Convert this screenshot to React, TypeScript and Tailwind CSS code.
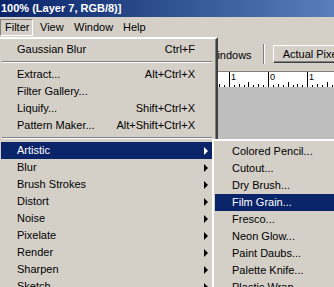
import React from "react";

type Item =
  | { kind: "sep" }
  | { kind: "item"; label: string; shortcut?: string; sub?: boolean; active?: boolean };

const filterItems: Item[] = [
  { kind: "item", label: "Gaussian Blur", shortcut: "Ctrl+F" },
  { kind: "sep" },
  { kind: "item", label: "Extract...", shortcut: "Alt+Ctrl+X" },
  { kind: "item", label: "Filter Gallery..." },
  { kind: "item", label: "Liquify...", shortcut: "Shift+Ctrl+X" },
  { kind: "item", label: "Pattern Maker...", shortcut: "Alt+Shift+Ctrl+X" },
  { kind: "sep" },
  { kind: "item", label: "Artistic", sub: true, active: true },
  { kind: "item", label: "Blur", sub: true },
  { kind: "item", label: "Brush Strokes", sub: true },
  { kind: "item", label: "Distort", sub: true },
  { kind: "item", label: "Noise", sub: true },
  { kind: "item", label: "Pixelate", sub: true },
  { kind: "item", label: "Render", sub: true },
  { kind: "item", label: "Sharpen", sub: true },
  { kind: "item", label: "Sketch", sub: true },
  { kind: "item", label: "Stylize", sub: true },
];

const artisticItems = [
  "Colored Pencil...",
  "Cutout...",
  "Dry Brush...",
  "Film Grain...",
  "Fresco...",
  "Neon Glow...",
  "Paint Daubs...",
  "Palette Knife...",
  "Plastic Wrap...",
  "Poster Edges...",
];

function Arrow({ white }: { white?: boolean }) {
  return (
    <svg width="5" height="8" viewBox="0 0 5 8" className="absolute right-[4px] top-[5px]">
      <polygon points="0,0 4,4 0,8" fill={white ? "#ffffff" : "#000000"} />
    </svg>
  );
}

function Ruler() {
  const ticks: React.ReactNode[] = [];
  const origin = 268;
  const unit = 39.2;
  for (let i = -2; i <= 2; i++) {
    for (let j = 0; j < 8; j++) {
      const x = Math.round(origin + i * unit + (j * unit) / 8) + 0.5;
      let len = 2;
      if (j === 0) len = 15;
      else if (j === 4) len = 5;
      else if (j % 2 === 0) len = 3;
      ticks.push(<line key={`${i}-${j}`} x1={x} x2={x} y1={16 - len} y2={16} stroke="#000" strokeWidth="1" />);
    }
  }
  const labels = [
    { x: 229, t: "1" },
    { x: 268, t: "0" },
    { x: 307, t: "1" },
  ];
  return (
    <svg width="334" height="16" className="block shrink-0">
      <rect x="0" y="0" width="334" height="16" fill="#ffffff" />
      <line x1="0" x2="334" y1="0.5" y2="0.5" stroke="#808080" />
      {ticks}
      {labels.map((l) => (
        <text key={l.x} x={l.x + 2} y="9" fontSize="9" fontFamily="Liberation Sans, Arial, sans-serif" fill="#000">
          {l.t}
        </text>
      ))}
    </svg>
  );
}

export default function App() {
  return (
    <div className="relative w-[334px] h-[287px] overflow-hidden bg-[#bebebe] font-['Liberation_Sans',Arial,sans-serif] text-[11px] text-black">
      <div className="flex flex-col h-full">
        {/* title bar */}
        <div className="h-[17px] shrink-0 flex items-center pl-[1px] bg-gradient-to-r from-[#0a246a] to-[#5a7dbb] text-white font-bold text-[11px] whitespace-nowrap">
          100% (Layer 7, RGB/8)]
        </div>

        {/* menu bar */}
        <div className="h-[20px] shrink-0 flex items-center bg-[#d4d0c8] whitespace-nowrap">
          <div className="w-[33px] h-[17px] mt-[1px] flex items-center pl-[4px] border-t border-l border-[#808080] border-r border-r-white border-b border-b-white">
            Filter
          </div>
          <div className="pl-[7px] w-[41px]">View</div>
          <div className="w-[49px]">Window</div>
          <div>Help</div>
        </div>

        {/* options bar */}
        <div className="h-[34px] shrink-0 flex items-center bg-[#d4d0c8] whitespace-nowrap">
          <div className="w-[207px] shrink-0" />
          <span className="shrink-0 mt-[2px]">Windows</span>
          <div className="shrink-0 ml-[11px] h-[20px] border-l border-[#808080] border-r border-r-white" />
          <div className="shrink-0 ml-[8px] h-[18px] flex items-center px-[9px] border-t border-l border-white border-r border-r-[#404040] border-b border-b-[#404040] shadow-[inset_-1px_-1px_0_#808080]">
            Actual Pixels
          </div>
        </div>

        {/* ruler */}
        <Ruler />

        {/* canvas */}
        <div className="flex-1 bg-[#bebebe]" />
      </div>

      {/* Filter menu */}
      <div className="absolute left-[-2px] top-[37px] w-[220px] h-[260px] bg-[#d4d0c8] border-2 border-t-white border-l-white border-r-[#404040] border-b-[#404040] shadow-[inset_-1px_-1px_0_#808080] pl-[1px] pr-[3px] py-[2px] whitespace-nowrap">
        {filterItems.map((it, i) =>
          it.kind === "sep" ? (
            <div key={i} className="h-[8px] pt-[3px] px-[1px]">
              <div className="h-[2px] border-t border-[#808080] border-b border-b-white" />
            </div>
          ) : (
            <div
              key={i}
              className={`relative h-[17px] flex items-center pl-[16px] pr-[18px] ${it.active ? "bg-[#0a246a] text-white" : ""}`}
            >
              <span className="flex-1">{it.label}</span>
              {it.shortcut && <span>{it.shortcut}</span>}
              {it.sub && <Arrow white={it.active} />}
            </div>
          )
        )}
      </div>

      {/* Artistic submenu */}
      <div className="absolute left-[212px] top-[139px] w-[140px] h-[170px] bg-[#d4d0c8] border-2 border-t-white border-l-white border-r-[#404040] border-b-[#404040] pl-[1px] py-[2px] whitespace-nowrap">
        {artisticItems.map((label) => (
          <div
            key={label}
            className={`h-[17px] flex items-center pl-[17px] ${label === "Film Grain..." ? "bg-[#0a246a] text-white" : ""}`}
          >
            {label}
          </div>
        ))}
      </div>
    </div>
  );
}
